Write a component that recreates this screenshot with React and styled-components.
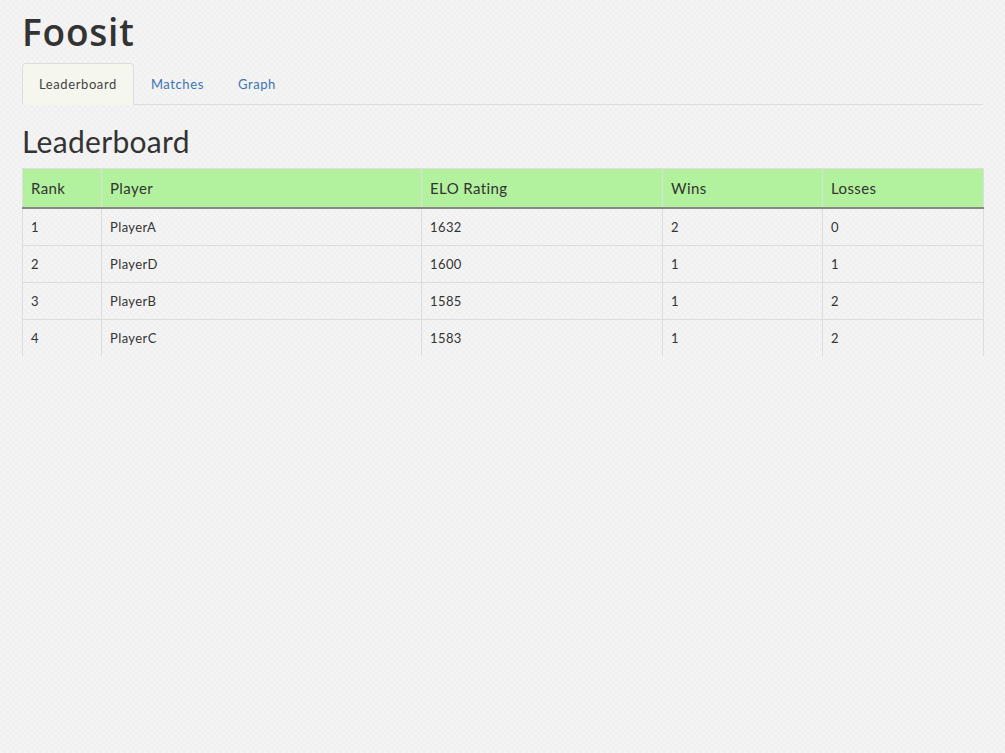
import styled, { createGlobalStyle } from "styled-components";

const GlobalStyle = createGlobalStyle`
  body {
    margin: 0;
    background-color: #f4f4f4;
    background-image:
      linear-gradient(45deg, #f0f0f0 25%, transparent 25%, transparent 75%, #f0f0f0 75%),
      linear-gradient(45deg, #f0f0f0 25%, transparent 25%, transparent 75%, #f0f0f0 75%);
    background-size: 6px 6px;
    background-position: 0 0, 3px 3px;
    font-family: Lato, "Liberation Sans", sans-serif;
    color: #333;
  }
`;

const Page = styled.div`
  padding: 0 22px 0 22px;
`;

const Brand = styled.h1`
  font-family: "Open Sans", Lato, sans-serif;
  font-weight: 600;
  font-size: 37px;
  line-height: 40px;
  margin: 0;
  padding: 12px 0 11px;
  color: #333;
  letter-spacing: 0.8px;
`;

const Tabs = styled.ul`
  list-style: none;
  margin: 0;
  padding: 0;
  display: flex;
  border-bottom: 1px solid #ddd;
`;

const Tab = styled.li`
  margin-bottom: -1px;
`;

const TabLink = styled.a`
  display: block;
  padding: 12px 16px 12px;
  font-size: 13px;
  line-height: 16px;
  letter-spacing: 0.6px;
  border: 1px solid ${(p) => (p.$active ? "#ddd" : "transparent")};
  border-bottom-color: ${(p) => (p.$active ? "#f5f7ee" : "transparent")};
  border-radius: 4px 4px 0 0;
  background: ${(p) => (p.$active ? "#f5f7ee" : "transparent")};
  color: ${(p) => (p.$active ? "#444" : "#3a74b5")};
  text-decoration: none;
  cursor: pointer;
`;

const Heading = styled.h2`
  font-size: 30px;
  font-weight: 400;
  line-height: 36px;
  letter-spacing: 0.3px;
  margin: 18px 0 9px;
  color: #333;
`;

const Table = styled.table`
  width: 100%;
  border-collapse: collapse;
  table-layout: fixed;
  font-size: 13px;
  letter-spacing: 0.4px;
  border: 1px solid #ddd;
  border-bottom: none;
`;

const HeadCell = styled.th`
  background: #b2f19d;
  text-align: left;
  font-weight: 400;
  font-size: 15px;
  letter-spacing: 0.4px;
  color: #333;
  padding: 0 8px;
  height: 38px;
  border-left: 1px solid #ddd;
  border-bottom: 2px solid #888;
`;

const Cell = styled.td`
  padding: 0 8px;
  height: 36px;
  border-left: 1px solid #ddd;
  border-top: 1px solid #ddd;
  color: #333;
`;

const columns = [
  { label: "Rank", width: 79 },
  { label: "Player", width: 320 },
  { label: "ELO Rating", width: 241 },
  { label: "Wins", width: 160 },
  { label: "Losses", width: 161 },
];

const players = [
  [1, "PlayerA", 1632, 2, 0],
  [2, "PlayerD", 1600, 1, 1],
  [3, "PlayerB", 1585, 1, 2],
  [4, "PlayerC", 1583, 1, 2],
];

export default function App() {
  return (
    <>
      <GlobalStyle />
      <Page>
        <Brand>Foosit</Brand>
        <Tabs>
          <Tab>
            <TabLink $active>Leaderboard</TabLink>
          </Tab>
          <Tab>
            <TabLink>Matches</TabLink>
          </Tab>
          <Tab>
            <TabLink>Graph</TabLink>
          </Tab>
        </Tabs>
        <Heading>Leaderboard</Heading>
        <Table>
          <colgroup>
            {columns.map((c) => (
              <col key={c.label} style={{ width: c.width }} />
            ))}
          </colgroup>
          <thead>
            <tr>
              {columns.map((c) => (
                <HeadCell key={c.label}>{c.label}</HeadCell>
              ))}
            </tr>
          </thead>
          <tbody>
            {players.map((row) => (
              <tr key={row[1]}>
                {row.map((v, i) => (
                  <Cell key={i}>{v}</Cell>
                ))}
              </tr>
            ))}
          </tbody>
        </Table>
      </Page>
    </>
  );
}
